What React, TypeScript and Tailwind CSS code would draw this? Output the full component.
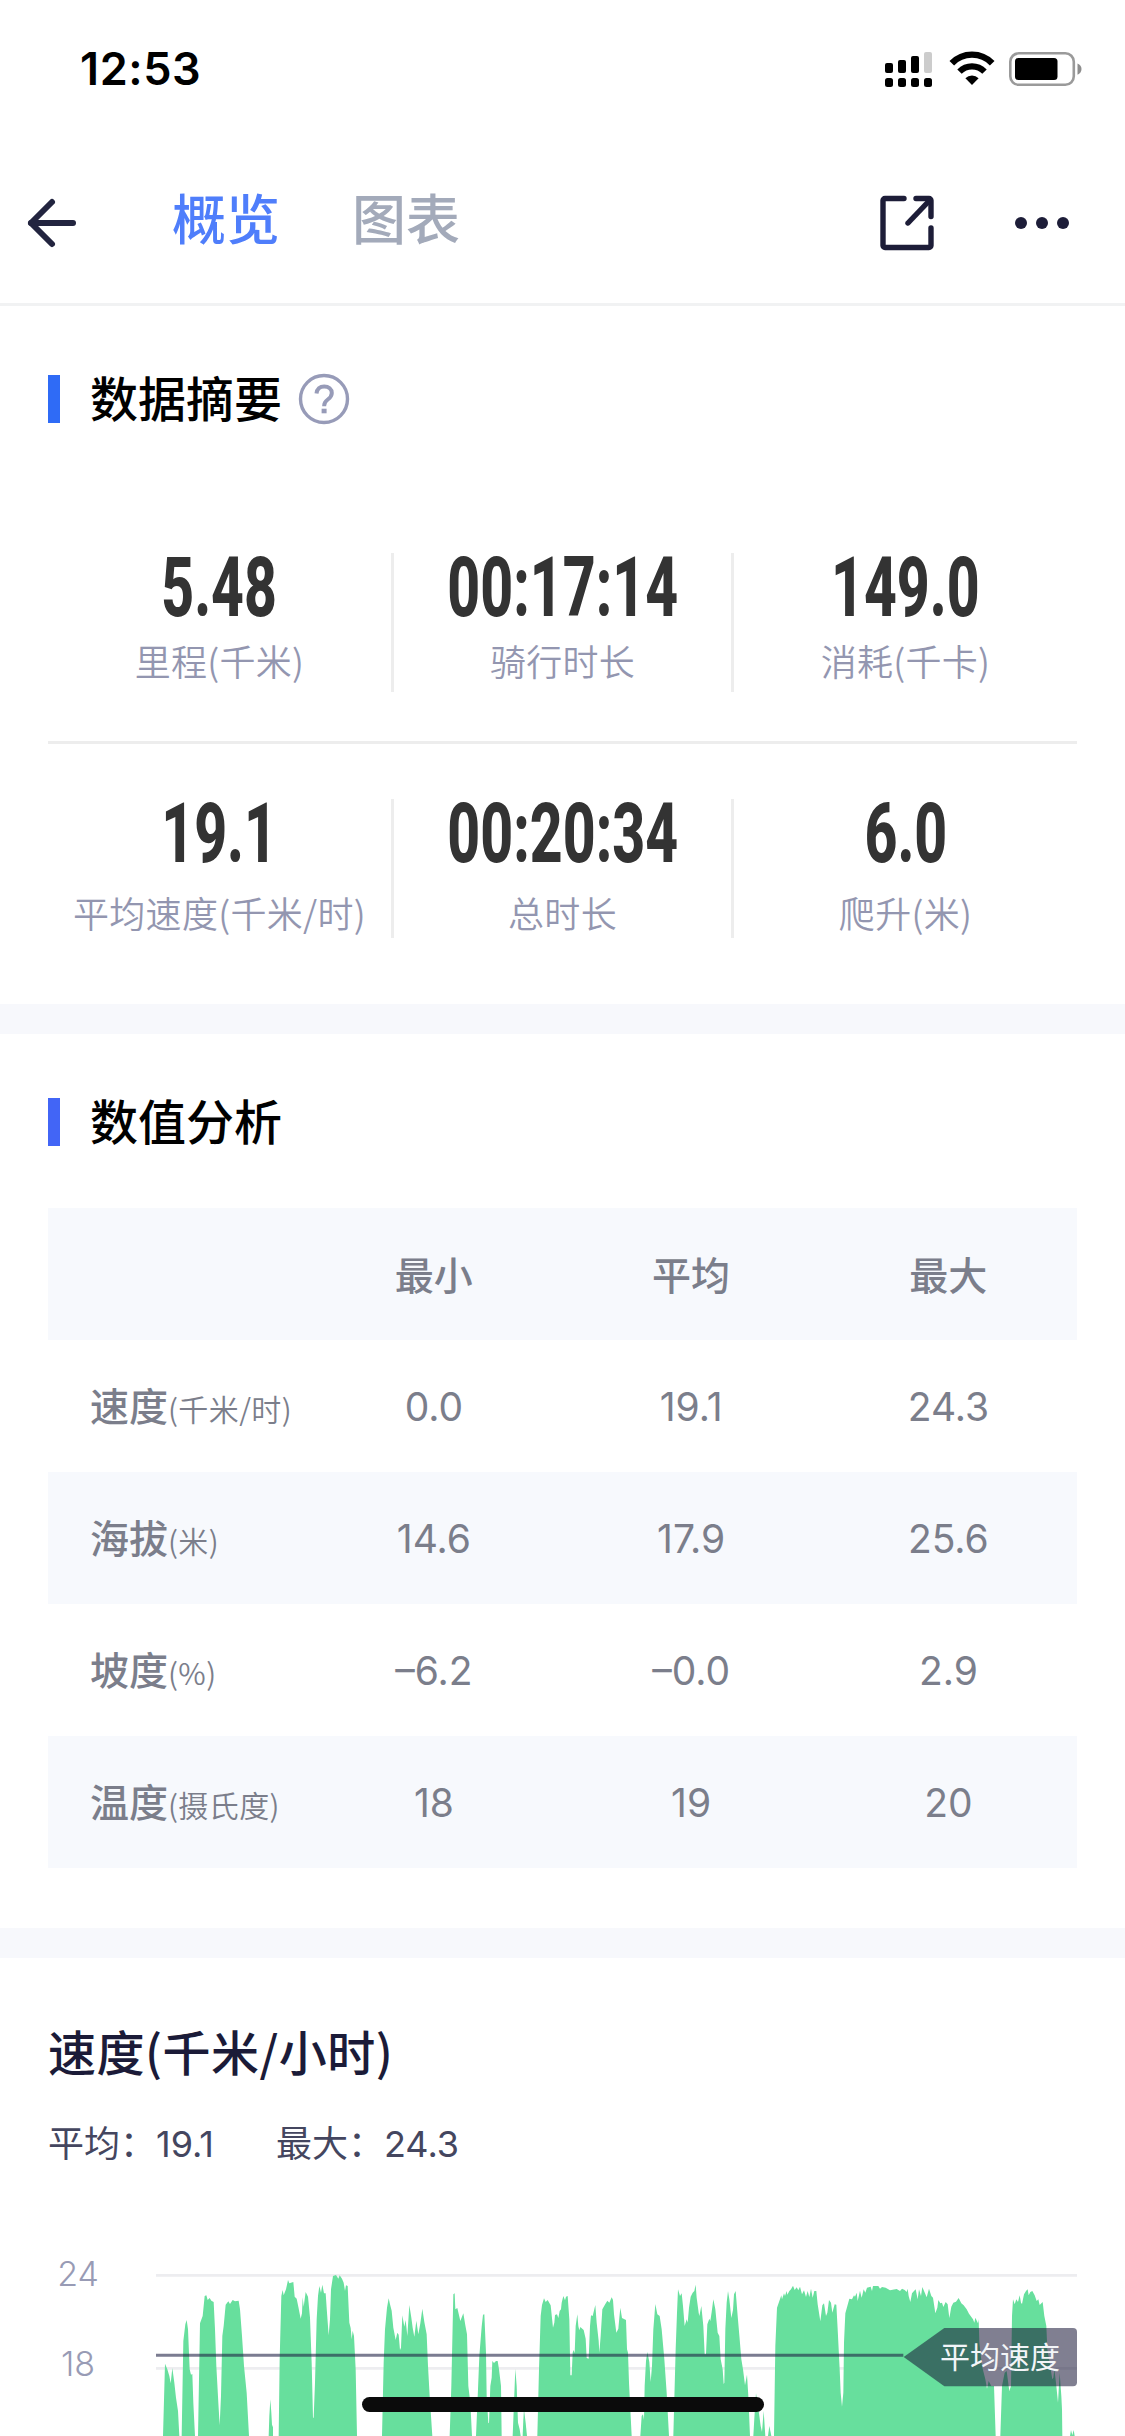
import { ArrowLeft } from "lucide-react";

const summary = [
    [
        { value: "5.48", label: "里程(千米)" },
        { value: "00:17:14", label: "骑行时长" },
        { value: "149.0", label: "消耗(千卡)" },
    ],
    [
        { value: "19.1", label: "平均速度(千米/时)" },
        { value: "00:20:34", label: "总时长" },
        { value: "6.0", label: "爬升(米)" },
    ],
];

const rows = [
    { name: "速度", unit: "(千米/时)", values: ["0.0", "19.1", "24.3"] },
    { name: "海拔", unit: "(米)", values: ["14.6", "17.9", "25.6"] },
    { name: "坡度", unit: "(%)", values: ["–6.2", "–0.0", "2.9"] },
    { name: "温度", unit: "(摄氏度)", values: ["18", "19", "20"] },
];

// speed curve, one closed shape per stretch of riding (3 units = 1px)
const speedAreas = [
    "489,600 495,383 502,400 508,420 512,442 517,396 523,440 528,485 534,525 538,600",
    "545,600 550,315 556,265 560,252 564,280 569,400 573,416 577,414 580,500 585,600",
    "594,600 600,262 608,240 614,180 619,178 623,192 629,186 634,194 641,198 645,280 649,390 655,500 659,568 663,480 667,300 671,270 677,206 685,196 690,204 698,192 705,196 716,194 720,220 726,300 732,390 740,470 747,600",
    "806,600 808,540 811,490 814,530 816,566 819,574 819,600",
    "836,600 839,370 844,180 848,162 851,178 858,160 864,132 868,142 880,138 884,182 890,188 895,212 902,248 906,232 908,184 911,212 917,168 924,182 930,245 935,380 939,545 941,545 945,440 950,250 954,180 958,150 963,170 967,146 972,172 977,172 981,230 986,298 990,250 993,160 999,120 1008,117 1015,128 1019,118 1026,128 1031,140 1035,165 1038,148 1043,150 1048,260 1052,276 1055,310 1058,284 1062,300 1067,400 1071,600",
    "1146,600 1151,380 1155,280 1161,215 1166,187 1170,205 1175,224 1180,275 1187,312 1192,290 1196,296 1200,342 1203,335 1207,238 1213,272 1217,252 1222,300 1228,207 1234,245 1238,275 1243,302 1249,254 1255,295 1261,262 1267,218 1273,258 1280,295 1284,390 1289,480 1297,600",
    "1349,600 1354,450 1360,175 1364,172 1366,220 1372,216 1381,255 1390,232 1396,268 1401,295 1405,450 1411,500 1416,600",
    "1428,600 1434,460 1438,360 1445,272 1449,236 1453,235 1458,350 1460,480 1465,560 1467,562 1471,450 1475,425 1477,375 1482,381 1488,375 1493,375 1497,400 1503,450 1505,600",
    "1538,600 1542,500 1546,398 1550,450 1554,560 1559,580 1562,600",
    "1568,600 1570,550 1572,520 1577,560 1581,600",
    "1612,600 1617,400 1622,240 1626,207 1632,187 1637,198 1643,192 1652,208 1659,275 1663,260 1665,237 1671,235 1675,246 1679,225 1683,220 1685,200 1690,180 1695,193 1698,182 1703,180 1708,250 1711,418 1715,418 1718,350 1721,342 1724,352 1727,270 1732,235 1735,270 1738,283 1741,273 1751,282 1757,308 1760,366 1766,368 1770,270 1773,238 1778,240 1786,207 1790,260 1796,315 1798,350 1802,300 1807,220 1816,204 1822,194 1828,200 1835,184 1839,192 1842,235 1849,290 1855,278 1858,245 1861,215 1866,246 1878,252 1881,340 1884,350 1887,440 1892,540 1895,600",
    "1921,600 1925,540 1929,535 1932,552 1934,450 1938,375 1942,348 1948,378 1952,438 1956,390 1960,280 1966,204 1972,235 1979,240 1985,280 1993,370 2000,470 2007,600",
    "2020,600 2027,340 2031,230 2034,160 2040,180 2045,172 2049,210 2054,270 2060,250 2063,260 2067,215 2072,182 2078,170 2083,165 2087,146 2090,185 2096,230 2098,240 2104,210 2110,270 2114,355 2118,355 2122,265 2128,248 2131,255 2135,228 2140,190 2146,220 2153,290 2158,300 2162,370 2168,400 2171,444 2173,440 2176,280 2180,200 2184,165 2188,190 2194,246 2199,222 2202,175 2207,165 2213,240 2219,310 2224,370 2229,400 2235,448 2241,416 2245,480 2250,600",
    "2260,600 2264,530 2268,472 2274,510 2282,570 2286,588 2291,525 2296,600",
    "2304,600 2308,570 2314,600",
    "2322,600 2326,330 2331,215 2337,198 2344,178 2346,190 2352,172 2355,180 2360,165 2362,176 2368,165 2373,160 2379,149 2384,162 2390,154 2395,163 2400,152 2406,175 2412,163 2418,183 2423,165 2428,183 2433,158 2438,185 2443,165 2449,165 2453,205 2461,256 2467,208 2472,202 2478,240 2482,230 2487,192 2493,200 2497,230 2504,205 2509,206 2513,280 2519,400 2522,470 2526,512 2530,470 2532,320 2536,232 2542,210 2548,188 2556,190 2562,178 2565,182 2570,170 2573,195 2580,164 2585,185 2591,160 2596,170 2601,155 2612,152 2616,165 2619,150 2635,150 2640,158 2646,153 2657,155 2670,163 2690,159 2700,165 2706,158 2714,162 2720,168 2723,158 2726,180 2731,198 2736,172 2742,165 2747,160 2753,190 2757,160 2763,180 2767,153 2775,172 2780,184 2787,158 2794,180 2799,185 2806,232 2812,215 2815,192 2821,202 2826,200 2830,213 2837,198 2843,205 2848,246 2854,212 2860,200 2868,197 2876,186 2884,202 2891,208 2900,220 2907,233 2919,250 2923,260 2926,245 2934,262 2936,250 2938,320 2946,390 2956,430 2961,458 2966,435 2974,450 2982,450 2987,600",
    "3001,600 3006,450 3014,410 3020,405 3028,465 3033,450 3036,240 3039,190 3044,205 3049,190 3054,198 3059,178 3063,200 3066,204 3072,175 3078,165 3083,160 3086,178 3091,168 3097,165 3104,178 3110,195 3115,190 3119,207 3128,198 3133,240 3139,270 3142,340 3149,380 3157,430 3160,425 3163,400 3168,440 3174,500 3179,410 3184,480 3186,520 3187,600",
    "3210,600 3213,582 3217,598 3221,582 3224,600",
];

const SectionTitle: React.FC<{ text: string; barClass: string; help?: boolean }> = ({ text, barClass, help }) => {
    return (
        <div className="flex h-12 items-center pl-12">
            <span className={`h-12 w-3 ${barClass}`} />
            <h2 className="mt-0.5 ml-[30px] text-[48px] leading-[48px] font-medium text-black">{text}</h2>
            {help && (
                <svg className="ml-4" width="52" height="52" viewBox="0 0 52 52" fill="none" stroke="#979bb8">
                    <circle cx="26" cy="26" r="23.5" strokeWidth="3.4" />
                    <path d="M18.5 20.5c.4-4.4 3.4-7.1 7.7-7.1 4.4 0 7.6 2.6 7.6 6.6 0 2.9-1.5 4.7-4 6.5-2.6 1.9-3.6 3.2-3.6 6v.8" strokeWidth="4" />
                    <path d="M23.6 38h5" strokeWidth="4.6" />
                </svg>
            )}
        </div>
    );
};

const StatusBar = () => {
    return (
        <div className="flex h-[138px] items-start justify-between pt-[45px] pr-[41px] pl-[80px]">
            <span className="text-[45px] leading-[48px] font-semibold tracking-[0.6px] text-black">12:53</span>
            <div className="flex pt-[6px]">
                <svg width="50" height="38" viewBox="0 0 50 38">
                    <rect x="1" y="12" width="8" height="10" rx="2" />
                    <rect x="14" y="9" width="8" height="13" rx="2" />
                    <rect x="27" y="5" width="8" height="17" rx="2" />
                    <rect x="40" y="1" width="8" height="21" rx="2" fill="#cccccc" />
                    <rect x="1" y="27" width="8" height="9" rx="2.5" />
                    <rect x="14" y="27" width="8" height="9" rx="2.5" />
                    <rect x="27" y="27" width="8" height="9" rx="2.5" />
                    <rect x="40" y="27" width="8" height="9" rx="2.5" />
                </svg>
                <svg className="ml-[14px]" width="48" height="38" viewBox="0 0 48 38" fill="none" stroke="#000">
                    <path d="M3.8 12.2a28 28 0 0 1 40.4 0" strokeWidth="6.4" />
                    <path d="M11.5 20.6a17.5 17.5 0 0 1 25 0" strokeWidth="6.2" />
                    <path d="M24 34l-6.6-6.8a9.3 9.3 0 0 1 13.2 0z" fill="#000" stroke="none" />
                </svg>
                <svg className="ml-[13px]" width="75" height="38" viewBox="0 0 75 38">
                    <rect x="1.3" y="2.3" width="63.5" height="31.5" rx="8.5" fill="none" stroke="#9a9a9a" strokeWidth="2.6" />
                    <rect x="6" y="7" width="42.5" height="22" rx="3.5" />
                    <path d="M68.5 12.5c2.6 1 4 3 4 5.5s-1.4 4.7-4 5.7z" fill="#8d8d8d" />
                </svg>
            </div>
        </div>
    );
};

const NavBar = () => {
    return (
        <div className="flex h-[168px] items-center border-b-[3px] border-[#f1f2f3] pt-1 pr-[55px] pl-[16px]">
            <ArrowLeft className="h-[72px] w-[72px] text-[#22243f]" strokeWidth={2} />
            <div className="mb-1 ml-[84px] flex gap-[72px] text-[54px] leading-[54px] font-medium">
                <span className="text-[#4f7efb]">概览</span>
                <span className="text-[#a3aaba]">图表</span>
            </div>
            <svg className="ml-auto" width="56" height="56" viewBox="0 0 56 56" fill="none" stroke="#1d1d38" strokeWidth="5.4" strokeLinecap="round" strokeLinejoin="round">
                <path d="M25 3.5H6a2 2 0 0 0-2 2v45a2 2 0 0 0 2 2h44a2 2 0 0 0 2-2V33" />
                <path d="M37 3.5H50a2 2 0 0 1 2 2v16" />
                <path d="M29 28L50 6" />
            </svg>
            <svg className="ml-[79px]" width="56" height="14" viewBox="0 0 56 14" fill="#1d1d38">
                <circle cx="7" cy="7" r="6" />
                <circle cx="28" cy="7" r="6" />
                <circle cx="49" cy="7" r="6" />
            </svg>
        </div>
    );
};

const SpeedChart = () => {
    return (
        <div className="mt-[88px] flex pr-12">
            <div className="flex w-[156px] flex-col items-center text-[34px] leading-[40px] font-light text-[#989bb5]">
                <span>24</span>
                <span className="mt-[50px]">18</span>
            </div>
            <div className="relative">
                <svg className="mt-[-18px]" width="921" height="200" viewBox="468 0 2763 600">
                    <path d="M468 118H3231M468 397H3231" stroke="#ededf0" strokeWidth="8" />
                    {speedAreas.map((points) => (
                        <polygon key={points} points={points} fill="#67df9d" />
                    ))}
                    <path d="M468 358H2710" stroke="#1c1e41" strokeOpacity="0.58" strokeWidth="9" />
                    <path d="M2711 363L2833 276H3219a12 12 0 0 1 12 12V439a12 12 0 0 1-12 12H2833z" fill="#141234" fillOpacity="0.54" />
                </svg>
                <span className="absolute top-[83px] right-[17px] text-[30px] leading-[40px] font-normal text-[#f2f5f8]">平均速度</span>
            </div>
        </div>
    );
};

const App = () => {
    return (
        <main className="relative h-[2436px] w-[1125px] overflow-hidden bg-white font-[Inter,'Noto_Sans_CJK_SC',sans-serif]">
            <StatusBar />
            <NavBar />

            <section className="pt-[69px]">
                <SectionTitle text="数据摘要" barClass="bg-[#2f6bf6]" help />
                <div className="mx-12 mt-[92px]">
                    {summary.map((items, index) => (
                        <div
                            key={index}
                            className={index === 0 ? "h-[229px] border-b-3 border-[#ededed] pt-[38px]" : "h-[260px] pt-[55px]"}
                        >
                            <div className="grid h-[139px] grid-cols-[346px_340px_343px] divide-x-[3px] divide-[#ededed]">
                                {items.map((item) => (
                                    <div key={item.label} className="flex flex-col items-center whitespace-nowrap">
                                        <span className="mt-[5px] h-[60px] origin-center scale-x-[0.68] font-[Roboto] text-[84px] leading-[60px] font-extrabold text-[#333333]">
                                            {item.value}
                                        </span>
                                        <span
                                            className={`font-['Noto_Sans_CJK_SC',sans-serif] text-[36px] leading-[40px] font-[350] tracking-[0.3px] text-[#9396b0] ${index === 0 ? "mt-[22px]" : "mt-[28px]"}`}
                                        >
                                            {item.label}
                                        </span>
                                    </div>
                                ))}
                            </div>
                        </div>
                    ))}
                </div>
            </section>

            <div className="h-[30px] bg-[#f7f8fc]" />

            <section className="pt-[64px]">
                <SectionTitle text="数值分析" barClass="bg-[#4265f6]" />
                <div className="mx-12 mt-[62px] text-[39px] text-[#7b7e8b]">
                    <div className="grid h-[132px] grid-cols-4 items-center bg-[#f7f9fd] pt-1 text-center font-medium">
                        <span />
                        <span>最小</span>
                        <span>平均</span>
                        <span>最大</span>
                    </div>
                    {rows.map((row) => (
                        <div key={row.name} className="grid h-[132px] grid-cols-4 items-center text-center even:bg-white odd:bg-[#f7f9fd]">
                            <span className="pb-1 pl-[42px] text-left font-['Noto_Sans_CJK_SC',sans-serif] font-medium whitespace-nowrap">
                                {row.name}
                                <span className="text-[30px] font-[350] tracking-[0.4px]">{row.unit}</span>
                            </span>
                            {row.values.map((value, index) => (
                                <span key={index} className="pt-0.5 font-normal">
                                    {value}
                                </span>
                            ))}
                        </div>
                    ))}
                </div>
            </section>

            <div className="mt-[60px] h-[30px] bg-[#f7f8fc]" />

            <section className="pt-[68px]">
                <h2 className="pl-12 font-['Noto_Sans_CJK_SC',sans-serif] text-[48px] leading-[48px] font-medium tracking-[0.5px] text-[#1b1b38]">
                    速度(千米/小时)
                </h2>
                <div className="mt-[48px] flex gap-[62px] pl-12 text-[36px] leading-[44px] font-normal text-[#44465f]">
                    <span>平均：19.1</span>
                    <span>最大：24.3</span>
                </div>
                <SpeedChart />
            </section>

            {/* home indicator */}
            <div className="absolute bottom-6 left-[362px] h-[15px] w-[402px] rounded-full bg-[#0b0b0b]" />
        </main>
    );
};

export default App;
